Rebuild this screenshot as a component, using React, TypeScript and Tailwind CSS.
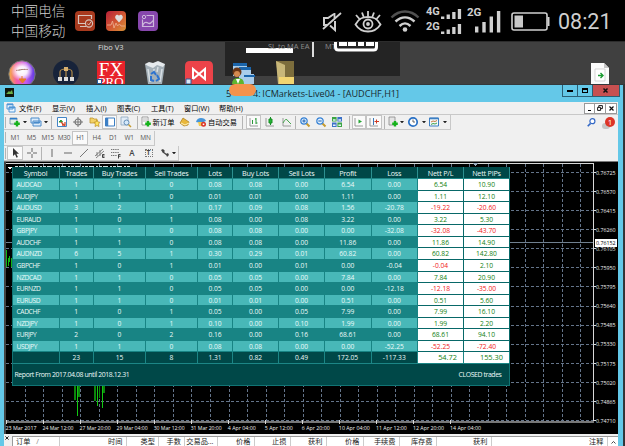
import React from 'react';

const columns = [
  { name: 'Symbol', w: 'w-[47px]' },
  { name: 'Trades', w: 'w-[34.5px]' },
  { name: 'Buy Trades', w: 'w-[52px]' },
  { name: 'Sell Trades', w: 'w-[52px]' },
  { name: 'Lots', w: 'w-[35px]' },
  { name: 'Buy Lots', w: 'w-[46px]' },
  { name: 'Sell Lots', w: 'w-[46px]' },
  { name: 'Profit', w: 'w-[46.5px]' },
  { name: 'Loss', w: 'w-[46.5px]' },
  { name: 'Nett P/L', w: 'w-[46px]' },
  { name: 'Nett PIPs', w: 'w-[46px]' },
];

const rows = [
  ['AUDCAD', '1', '1', '0', '0.08', '0.08', '0.00', '6.54', '0.00', '6.54', '10.90'],
  ['AUDJPY', '1', '1', '0', '0.01', '0.01', '0.00', '1.11', '0.00', '1.11', '12.10'],
  ['AUDUSD', '3', '2', '1', '0.17', '0.09', '0.08', '1.56', '-20.78', '-19.22', '-20.60'],
  ['EURAUD', '1', '0', '1', '0.08', '0.00', '0.08', '3.22', '0.00', '3.22', '5.30'],
  ['GBPJPY', '1', '1', '0', '0.08', '0.08', '0.00', '0.00', '-32.08', '-32.08', '-43.70'],
  ['AUDCHF', '1', '1', '0', '0.08', '0.08', '0.00', '11.86', '0.00', '11.86', '14.90'],
  ['AUDNZD', '6', '5', '1', '0.30', '0.29', '0.01', '60.82', '0.00', '60.82', '142.80'],
  ['GBPCHF', '1', '0', '1', '0.01', '0.00', '0.01', '0.00', '-0.04', '-0.04', '2.10'],
  ['NZDCAD', '1', '1', '0', '0.05', '0.05', '0.00', '7.84', '0.00', '7.84', '20.90'],
  ['EURNZD', '1', '1', '0', '0.05', '0.05', '0.00', '0.00', '-12.18', '-12.18', '-35.00'],
  ['EURUSD', '1', '1', '0', '0.01', '0.01', '0.00', '0.51', '0.00', '0.51', '5.60'],
  ['CADCHF', '1', '0', '1', '0.05', '0.00', '0.05', '7.99', '0.00', '7.99', '16.10'],
  ['NZDJPY', '1', '0', '1', '0.10', '0.00', '0.10', '1.99', '0.00', '1.99', '2.20'],
  ['EURJPY', '2', '0', '2', '0.16', '0.00', '0.16', '68.61', '0.00', '68.61', '94.10'],
  ['USDJPY', '1', '1', '0', '0.08', '0.08', '0.00', '0.00', '-52.25', '-52.25', '-72.40'],
];

const totals = ['', '23', '15', '8', '1.31', '0.82', '0.49', '172.05', '-117.33', '54.72', '155.30'];

const prices = ['0.76725', '0.76570', '0.76415', '0.76260', '0.76105', '0.75950', '0.75795', '0.75640', '0.75485', '0.75330', '0.75175', '0.75020', '0.74865', '0.74710'];

const times = ['23 Mar 2017', '24 Mar 12:00', '27 Mar 20:00', '29 Mar 04:00', '30 Mar 12:00', '31 Mar 20:00', '4 Apr 04:00', '5 Apr 12:00', '6 Apr 20:00', '10 Apr 04:00', '11 Apr 12:00', '12 Apr 20:00', '14 Apr 04:00'];

const menus = [
  { name: '文件(F)', w: 'w-[33px]' },
  { name: '显示(V)', w: 'w-[34px]' },
  { name: '插入(I)', w: 'w-[31px]' },
  { name: '图表(C)', w: 'w-[34px]' },
  { name: '工具(T)', w: 'w-[33px]' },
  { name: '窗口(W)', w: 'w-[35px]' },
  { name: '帮助(H)', w: 'w-[35px]' },
];

const orderCols = [
  { name: '时间', w: 'w-[66.5px]' },
  { name: '类型', w: 'w-[32.5px]' },
  { name: '手数', w: 'w-[26px]' },
  { name: '交易品...', w: 'w-[32.5px]' },
  { name: '价格', w: 'w-[37px]' },
  { name: '止损', w: 'w-[36px]' },
  { name: '获利', w: 'w-[36px]' },
  { name: '价格', w: 'w-[37px]' },
  { name: '手续费', w: 'w-[36px]' },
  { name: '库存费', w: 'w-[37px]' },
  { name: '获利', w: 'w-[55px]' },
  { name: '注释', w: 'w-[116px]' },
];

const Slot = ({ w, boxed, children }: { w: string; boxed?: boolean; children?: React.ReactNode }) => (
  <div className={`${w} h-[14px] shrink-0 flex items-center justify-center whitespace-nowrap ${boxed ? 'border border-[#c4c4c4] bg-[#fafafa]' : ''}`}>
    {children}
  </div>
);

const Ico = ({ children, size = 10 }: { children: React.ReactNode; size?: number }) => (
  <svg width={size} height={size} viewBox="0 0 10 10" fill="none" className="shrink-0 overflow-visible">{children}</svg>
);

const Caret = () => (
  <Slot w="w-[4px]"><svg width="4" height="2.5" viewBox="0 0 4 2.5" className="shrink-0"><path d="M0 0h4L2 2.5z" fill="#222" /></svg></Slot>
);
const Sep = ({ w }: { w: string }) => <Slot w={w}><div className="w-px h-[13px] shrink-0 bg-[#b4b4b4]" /></Slot>;
const Handle = () => <Slot w="w-[3px]"><div className="w-px h-[11px] bg-[#b4b4b4]" /></Slot>;

const Plus = () => <path d="M4.2 6.8h5.6M7 4v5.6" stroke="#16b21c" strokeWidth="2.4" />;

const bars = (x: number, base: number, hs: number[], step: number, bw: number) =>
  hs.map((h, i) => <rect key={i} x={x + i * step} y={base - h} width={bw} height={h} fill="#d0d0d0" />);

function StatusBar() {
  return (
    <div className="h-[41px] shrink-0 bg-black flex items-center text-[#cfcfcf]">
      <div className="w-[75px] pl-[11px] pb-px text-[13.6px] leading-[20px] font-light whitespace-nowrap font-['Noto_Sans_CJK_SC',sans-serif]">
        <div>中国电信</div>
        <div>中国移动</div>
      </div>
      <div className="flex gap-[11px]">
        <svg width="20" height="20" viewBox="0 0 20 20" fill="none">
          <rect width="20" height="20" rx="4" fill="#a83a1e" />
          <path d="M10 12.5H3.5v-8h13V8M5 15.5h6" stroke="#d8c4bc" strokeWidth="1.2" />
          <circle cx="14" cy="12.5" r="3.6" stroke="#d8c4bc" strokeWidth="1.1" />
          <path d="m12.3 12.5 1.4 1.5 2.8-3.7" stroke="#d8c4bc" />
        </svg>
        <svg width="20" height="20" viewBox="0 0 20 20" fill="none">
          <defs><linearGradient id="heart" x1="0" y1="0" x2="1" y2="1"><stop stopColor="#b51f38" /><stop offset=".55" stopColor="#d35a32" /><stop offset="1" stopColor="#d89438" /></linearGradient></defs>
          <rect width="20" height="20" rx="4" fill="url(#heart)" />
          <path d="M13 11.5 9.7 7.7C7.9 5 11.5 2.2 13 4.8c1.5-2.6 5.1.2 3.3 2.9z" fill="#ddd" />
          <path d="M1 14h4l1.5-4L8 17l2-5 1.5 3 2-2 1.5 2h4" stroke="#eba98a" strokeWidth=".9" />
        </svg>
        <svg width="20" height="20" viewBox="0 0 20 20" fill="none" className="ml-px">
          <rect width="20" height="20" rx="4" fill="#8747ad" />
          <path d="M8.5 4.5h7v11h-11v-7M4.5 15.3c1-4 3.5-4.8 5.5-3.3s3 0 5.3-2.5" stroke="#cdb8dc" strokeWidth="1.2" />
          <circle cx="6" cy="6" r="1.7" stroke="#cdb8dc" />
        </svg>
      </div>
      <svg width="22" height="24" viewBox="0 0 22 24" fill="none" className="ml-[163px]">
        <path d="M13 5 7 9H3v7h3M9 16.5l5 4.5V12" stroke="#d0d0d0" strokeWidth="2" />
        <path d="M13.5 4v5M2 20 20 4" stroke="#d0d0d0" strokeWidth="1.8" />
      </svg>
      <svg width="28" height="24" viewBox="0 0 28 24" fill="none" className="ml-[11px]" stroke="#d0d0d0" strokeWidth="1.8">
        <path d="M1.5 15.5C5 9 9 8 14 8s9 1 12.500 7.500C23 21 19 22.500 14 22.500S5 21 1.500 15.500z" />
        <circle cx="14" cy="15" r="4.500" /><circle cx="14" cy="15" r="1" />
        <path d="m2 6 3.500 4M8 3.500 9.700 8M14 2v5.500M20 3.500 18.300 8M26 6l-3.500 4" />
      </svg>
      <svg width="30" height="24" viewBox="0 0 30 24" fill="none" className="ml-[8px]" strokeWidth="2.400">
        <path d="M1.500 8.500c8-8 19-8 27 0" stroke="#505050" />
        <path d="M5.500 12.500c6-5.500 13-5.500 19 0M9.500 17c4-3.500 7-3.500 11 0" stroke="#d0d0d0" />
        <circle cx="15" cy="20.500" r="2.300" fill="#d0d0d0" />
      </svg>
      <div className="ml-[6px] w-[36px] pb-px flex flex-col gap-[3px] font-['Roboto',sans-serif] font-bold text-[11px] leading-[10px]">
        <div className="flex h-[12px]"><span className="w-[15px]">4G</span><svg width="21" height="12" viewBox="0 0 21 12" className="shrink-0">{bars(0, 12, [2.500, 4.500, 7, 10], 5.600, 3.300)}</svg></div>
        <div className="flex h-[12px]"><span className="w-[15px]">2G</span><svg width="21" height="12" viewBox="0 0 21 12" className="shrink-0">{bars(0, 12, [2.500, 4.500, 7, 10], 5.600, 3.300)}</svg></div>
      </div>
      <div className="ml-[5px] w-[35px] h-[28px] flex font-['Roboto',sans-serif] font-bold text-[11.500px] leading-[11px]">
        <span className="w-[8px]">2G</span>
        <svg width="26" height="26" viewBox="0 0 26 26" className="shrink-0">{bars(0, 25.500, [6, 10.500, 16, 21.500], 7.300, 3.400)}</svg>
      </div>
      <svg width="39" height="19" viewBox="0 0 39 19" fill="none" className="ml-[9px] mt-[2px] shrink-0">
        <rect x="1" y="1" width="35" height="17" rx="2" stroke="#d0d0d0" strokeWidth="1.600" />
        <path d="M37.500 5v9" stroke="#d0d0d0" strokeWidth="2" />
        <rect x="3.500" y="3.500" width="8.500" height="12" fill="#c8c8c8" />
      </svg>
      <div className="ml-[8px] mt-[3px] font-['Roboto',sans-serif] text-[21.500px] leading-none">08:21</div>
    </div>
  );
}

function Desktop() {
  return (
    <div className="relative h-[43px] shrink-0 overflow-hidden bg-[#404040] border-t border-[#2c2c2c]">
      <div className="absolute left-[98px] top-px font-['Open_Sans',sans-serif] text-[7.500px] leading-[9px] text-[#ddd] whitespace-nowrap">Fibo V3</div>
      <div className="absolute left-[225px] top-0 w-[175px] h-[34px] bg-[#242424] text-[#8c8c8c] font-['Open_Sans',sans-serif] text-[7.500px] leading-[9px]">
        <div className="absolute left-[21px] top-[6px] w-[47px] h-[5px] bg-white" />
        <span className="absolute left-[43px] top-0 whitespace-nowrap">SL to MA EA</span>
        <span className="absolute left-[100px] top-0">MT</span>
        <div className="absolute left-[87px] top-0 w-[2px] h-[15px] bg-[#ddd]" />
        <svg className="absolute left-[109px] top-0" width="44" height="10" viewBox="0 0 44 10" fill="none">
          <path d="M1.500 0v5q0 3 3 3h35q3 0 3-3V0" stroke="#fff" strokeWidth="3" />
          <path d="M5 2h8M14 2h8M24 2h6M32 2h8" stroke="#fff" strokeWidth="4" />
        </svg>
      </div>
      <div className="relative h-full pl-[8px] flex items-end">
        <svg width="28" height="24" viewBox="0 0 28 24">
          <defs>
            <linearGradient id="wheel"><stop stopColor="#f3b23c" /><stop offset=".3" stopColor="#f45ba6" /><stop offset=".65" stopColor="#c35cf0" /><stop offset="1" stopColor="#5b3be0" /></linearGradient>
            <radialGradient id="shine"><stop stopColor="#fff" /><stop offset=".45" stopColor="#fff" stopOpacity=".9" /><stop offset="1" stopColor="#fff" stopOpacity="0" /></radialGradient>
          </defs>
          <circle cx="14" cy="14" r="13.200" fill="url(#wheel)" stroke="#777" />
          <ellipse cx="14" cy="11" rx="11" ry="10" fill="url(#shine)" />
          <path d="M8 10.500q6-1.500 12-1" stroke="#a65" strokeDasharray="1 .6" />
          <path d="M14 16v3M11 19h7l-3.500 4z" fill="#e77d25" stroke="#e77d25" />
        </svg>
        <svg width="26" height="24" viewBox="0 0 26 24" fill="none" className="ml-[17px]">
          <circle cx="13" cy="13" r="13" fill="#17233a" />
          <path d="M7 18v-6q0-3 6-3t6 3v6M13 9v9" stroke="#b08a4a" strokeWidth="1.200" />
          <path d="M11 7h4v4h-4z" fill="#d8b070" />
          <path d="M5 17h4v4H5zM11 17h4v4h-4zM17 17h4v4h-4z" fill="#ddd" />
        </svg>
        <div className="relative ml-[18px] w-[28px] h-[23px] overflow-hidden bg-[#e8222a] text-white text-center font-['Liberation_Serif',serif] text-[19px] leading-[15px] pt-px">
          <div>FX</div>
          <div className="text-[13px] leading-[9px]">PRO</div>
          <div className="absolute left-0 bottom-0 size-[5px] bg-white border border-[#265c9c]" />
        </div>
        <svg width="22" height="23" viewBox="0 0 22 23" className="ml-[19px]">
          <path d="m1 3 3 20h14l3-20z" fill="#a4b0b8" />
          <path d="m1 3 4-2 4 1 5-2 7 3-2 3-6-2-4 3-5-2z" fill="#e6eaed" />
          <path d="m4 8 2 13M18 8l-2 13M10 8v3M14 6l-1 5" stroke="#d8dfe4" strokeWidth="1.500" />
          <path d="m7 13 3-2 2 3M7 15v4l3 1M12 20l3-2-2-4" stroke="#2d73cf" strokeWidth="2" fill="none" />
        </svg>
        <svg width="28" height="23" viewBox="0 0 28 23" fill="none" className="ml-[19px]">
          <path d="M0 23V5q0-5 5-5h18q5 0 5 5v18z" fill="#ec4349" />
          <path d="M8 18V8l12 10V8L8 18" stroke="#fff" strokeWidth="2" />
          <path d="M1 18h5v5H1z" fill="#dce8f4" stroke="#265c9c" />
        </svg>
        <svg width="24" height="22" viewBox="0 0 24 22" className="ml-[19px]">
          <path d="M1 1h14v13H1zM7 5h12v12H7zM10 12h12v10H10z" fill="#aacdea" />
          <path d="M1 1h14v3H1zM7 5h12v3H7zM12 13h11v2H12z" fill="#1b65ab" />
          <circle cx="5" cy="10" r="4.500" fill="#6a3515" /><circle cx="5" cy="12" r="3" fill="#d58a50" />
          <path d="M0 22q0-6 6-6t6 6z" fill="#5eb52f" /><path d="m4 17 2 5 2-5z" fill="#fff" />
        </svg>
        <svg width="19" height="23" viewBox="0 0 19 23" className="ml-[20px]">
          <path d="M0 0h18v23H3z" fill="#7c6d3c" />
          <path d="m0 0 9 4v19H2z" fill="#c8b779" />
          <path d="M3 16h15v7H3z" fill="#f2d570" />
        </svg>
        <svg width="18" height="21" viewBox="0 0 18 21" className="ml-[296px]">
          <path d="M0 0h13l5 5v16H0z" fill="#fbfbfb" /><path d="M13 0v5h5z" fill="#c6c6c6" />
          <path d="M4 6h10v12H4z" fill="#fff" stroke="#c4c4c4" strokeWidth=".7" />
          <path d="M7 12.500h5M9.500 10l2.500 2.500L9.500 15" stroke="#1c9b32" strokeWidth="1.400" fill="none" />
        </svg>
      </div>
    </div>
  );
}

function TitleBar() {
  return (
    <div className="relative h-[17px] shrink-0 flex items-start pl-[5px] text-[#182830]">
      <svg width="9" height="9" viewBox="0 0 9 9" className="mt-[3px]"><rect width="9" height="9" fill="#10160c" /><path d="m1 6 3-3 1 1 2-2 1 4z" fill="#6cae47" /></svg>
      <div className="absolute left-[226px] top-[2px] font-['Open_Sans',sans-serif] text-[9.500px] leading-[13px]">5</div>
      <div className="ml-[239px] mt-[2px] w-[144px] whitespace-nowrap font-['Open_Sans',sans-serif] text-[9.100px] leading-[13px]">
        <span className="inline-block w-[7px] overflow-visible">4:</span> ICMarkets-Live04 - [AUDCHF,H1]
      </div>
      <div className="absolute left-[229px] -top-px w-[27px] h-[12px] rounded-[6px] bg-[#f4924c]" />
      <div className="ml-[164.500px] flex h-[12px] border border-t-0 border-[#2b5f74]">
        <div className="w-[15px] border-r border-[#2b5f74] flex items-end justify-center pb-[4px]"><div className="w-[6px] h-[2px] bg-black" /></div>
        <div className="w-[15px] border-r border-[#2b5f74] flex items-center justify-center"><div className="w-[6px] h-[5px] border border-t-2 border-black" /></div>
        <div className="w-[26px] bg-[#c75050] flex items-center justify-center"><Ico size={5}><path d="m1 1 8 8M9 1 1 9" stroke="#111" strokeWidth="3" /></Ico></div>
      </div>
    </div>
  );
}

function MenuBar() {
  return (
    <div className="h-[13px] shrink-0 flex items-center border-b border-[#c8c8c8] text-[7.200px] leading-[10px] font-['Open_Sans','Noto_Sans_CJK_SC',sans-serif]">
      <div className="w-[15px] pl-[2px]"><Ico><path d="M1 1h6v5H1zM3 4h6v5H3z" fill="#eaf5ff" stroke="#5196d6" /><path d="M1 1.500h6M3 4.500h6" stroke="#5196d6" strokeWidth="1.500" /></Ico></div>
      {menus.map(m => <div key={m.name} className={`${m.w} shrink-0 whitespace-nowrap`}>{m.name}</div>)}
      <div className="ml-auto mr-px flex h-[11px] bg-white border border-[#999]">
        <div className="w-[10px] border-r border-[#999] flex items-end justify-center pb-[2px]"><div className="w-[3px] h-px bg-black" /></div>
        <div className="w-[11px] border-r border-[#999] flex items-center justify-center"><Ico size={6}><path d="M3 4V1h6v5H6M1 4h5v5H1z" stroke="#111" strokeWidth="1.600" /></Ico></div>
        <div className="w-[10px] flex items-center justify-center"><Ico size={5}><path d="m1 1 8 8M9 1 1 9" stroke="#111" strokeWidth="2.400" /></Ico></div>
      </div>
    </div>
  );
}

const Mag = ({ sign }: { sign: string }) => (
  <Ico><path d="m6 6 3.500 3.500" stroke="#c59a2e" strokeWidth="2" /><circle cx="4" cy="4" r="3.200" fill="#e4f2ff" stroke="#3681d4" strokeWidth="1.200" /><path d={sign} stroke="#1b5fae" /></Ico>
);
const Axis = () => <path d="M1 1v8h8" stroke="#9a9a9a" />;

function Toolbars() {
  return (
    <div className="shrink-0 text-[#444] font-['Open_Sans','Noto_Sans_CJK_SC',sans-serif]">
      <div className="h-[15px] flex items-center">
        <div className="flex items-center border-r border-b border-[#c8c8c8] pr-[3px]">
          <Handle />
          <Slot w="w-[15px]"><Ico><path d="M0 1h7v6H0z" fill="#e1f0e5" stroke="#6a8b9f" strokeWidth=".8" /><path d="M0 1h7v1.500H0z" fill="#2e7ccb" /><Plus /></Ico></Slot>
          <Slot w="w-[1px]" /><Caret />
          <Slot w="w-[17px]"><Ico><path d="M0 1h8v5H0zM2 4h8v5H2z" fill="#dcecfb" stroke="#4a8bca" /><path d="M3 5.500h6" stroke="#4a8bca" strokeWidth="1.500" /></Ico></Slot>
          <Caret />
          <Sep w="w-[7px]" />
          <Slot w="w-[13px]"><Ico><path d="M.5.5h9v9h-9z" fill="#fff" stroke="#4385c6" /><path d="m2 5 2-2 1.500 2z" fill="#2a9c38" stroke="#2a9c38" /><path d="m4 5 4 4M5 8h3V5" stroke="#d34a2b" strokeWidth="1.300" /></Ico></Slot>
          <Slot w="w-[19px]"><Ico><circle cx="5" cy="5" r="3" stroke="#777" strokeWidth="1.200" /><path d="M5 0v10M0 5h10" stroke="#777" /></Ico></Slot>
          <Slot w="w-[15px]"><Ico><path d="M0 1h3l1 1h3v4H0z" fill="#f2d167" stroke="#b78b22" strokeWidth=".7" /><path d="m7 3 1 2 2 .3L8.500 7 9 9.500l-2-1-2 1L5.400 7 4 5.300 6 5z" fill="#ffe35c" stroke="#b78b22" strokeWidth=".7" /></Ico></Slot>
          <Slot w="w-[15px]" boxed><Ico><path d="M.5 1h9v8h-9z" fill="#fff" stroke="#3c7fc4" /><path d="M2 1v8" stroke="#3c7fc4" strokeWidth="2.500" /></Ico></Slot>
          <Slot w="w-[17px]"><Ico><path d="M0 0h7v8H0z" fill="#e2ecf6" stroke="#8ca5bd" strokeWidth=".8" /><path d="m7 7 3 3" stroke="#c59a2e" strokeWidth="1.500" /><circle cx="5.500" cy="5.500" r="2.500" fill="#d5e9fb" stroke="#658fb8" /></Ico></Slot>
          <Sep w="w-[6px]" />
          <Slot w="w-[12px]"><Ico><path d="M1 0h6v8H1z" fill="#fff" stroke="#888" strokeWidth=".8" /><path d="M2 2h4M2 4h4" stroke="#999" strokeWidth=".7" /><Plus /></Ico></Slot>
          <Slot w="w-[23px]"><span className="text-[7.300px] text-black">新订单</span></Slot>
          <Slot w="w-[20px]"><Ico><path d="m3 1 6 4-1 3-4 1-4-3z" fill="#e9b83c" stroke="#a87815" strokeWidth=".7" /><path d="m1 6 4 2 4-2" stroke="#fff2ba" /></Ico></Slot>
          <Slot w="w-[12px]"><Ico><path d="M0 5q1-4 5-4t5 3L5 6z" fill="#4695d8" /><path d="m2 5 6 0-2 4H3z" fill="#f1cb50" /><circle cx="7.500" cy="7.300" r="2.500" fill="#db3527" /><path d="M6.700 6.500h1.600v1.600H6.700z" fill="#fff" /></Ico></Slot>
          <Slot w="w-[31px]"><span className="text-[7.200px] text-black">自动交易</span></Slot>
          <Sep w="w-[8px]" />
          <Slot w="w-[15px]" boxed><Ico><Axis /><path d="M3.500 3v4M3 6h1M7 1v6M6 2h1M7 6h1.500" stroke="#2a9838" /></Ico></Slot>
          <Slot w="w-[17px]"><Ico><Axis /><path d="M5.500 0v8" stroke="#178f25" /><path d="M4 2h3v4H4z" fill="#25b534" stroke="#178f25" /></Ico></Slot>
          <Slot w="w-[17px]"><Ico><Axis /><path d="M1 6q3-6 5-2l3 3" stroke="#45a44d" /></Ico></Slot>
          <Sep w="w-[1px]" />
          <Slot w="w-[18px]"><Mag sign="M2.300 4h3.400M4 2.300v3.400" /></Slot>
          <Slot w="w-[14px]"><Mag sign="M2.300 4h3.400" /></Slot>
          <Slot w="w-[18px]"><Ico><path d="M0 0h4.600v4.600H0zM5.400 5.400H10V10H5.400z" fill="#3ba544" /><path d="M5.400 0H10v4.600H5.400zM0 5.400h4.600V10H0z" fill="#3c72c8" /><path d="M1 3h2.600M6.400 3H9M1 8.300h2.600M6.400 8.300H9" stroke="#e8f2f8" strokeWidth="1.600" /></Ico></Slot>
          <Sep w="w-[6px]" />
          <Slot w="w-[14px]" boxed><Ico><Axis /><path d="M4.500 2.500v4L8 4.500z" fill="#25a534" /></Ico></Slot>
          <Slot w="w-[16px]" boxed><Ico><Axis /><path d="M4.500 1v7" stroke="#3979b9" /><path d="M5.500 4.500H10M7.500 2.500v4" stroke="#cf3b24" /></Ico></Slot>
          <Sep w="w-[4px]" />
          <Slot w="w-[14px]"><Ico><path d="M1 0h6v8H1z" fill="#e4e4e4" stroke="#888" strokeWidth=".8" /><Plus /></Ico></Slot>
          <Caret />
          <Slot w="w-[18px]"><Ico><circle cx="5" cy="5" r="4.200" fill="#fff" stroke="#2870c5" strokeWidth="1.700" /><path d="M5 2.500V5h2" stroke="#555" strokeWidth=".9" /></Ico></Slot>
          <Caret />
          <Slot w="w-[16px]"><Ico><path d="M.5 1h9v8h-9z" fill="#f4f8fa" stroke="#3c7fc4" /><path d="M.5 1.500h9" stroke="#3c7fc4" strokeWidth="1.600" /><path d="m2 5 2-1 2 .5L8 3.500" stroke="#c77a3f" /><path d="m2 7.500 2-1 2 .5 2-1" stroke="#3fa34e" /></Ico></Slot>
          <Slot w="w-[1px]" /><Caret />
        </div>
        <div className="ml-auto pr-[3px] flex items-center gap-[6px]">
          <Ico size={9}><circle cx="6" cy="3.500" r="2.800" fill="#fff" stroke="#3368c6" strokeWidth="1.300" /><path d="M4 6 .8 9.200" stroke="#3368c6" strokeWidth="1.800" /></Ico>
          <div className="relative w-[13px] h-[12px]">
            <div className="absolute left-0 bottom-0 w-[8px] h-[6px] rounded-full bg-[#c5c5c5]" />
            <div className="absolute right-0 top-0 size-[10px] rounded-full bg-[#dd3426] text-white text-[8px] leading-[10px] text-center">1</div>
          </div>
        </div>
      </div>
      <div className="h-[16px] flex items-center">
        <div className="flex items-center border-r border-b border-[#c8c8c8] text-[6.500px] tracking-[-0.200px] text-[#555]">
          <Handle />
          {['M1', 'M5', 'M15', 'M30', 'H1', 'H4', 'D1', 'W1', 'MN'].map(p => (
            <Slot key={p} w="w-[16.300px]" boxed={p === 'H1'}>{p}</Slot>
          ))}
        </div>
      </div>
      <div className="h-[15px] flex items-center">
        <div className="flex items-center border-r border-b border-[#c8c8c8] pr-[2px]">
          <Handle />
          <Slot w="w-[16px]" boxed><Ico><path d="M3 0v8l2-1.800 1.500 3.500 1.400-.7-1.500-3.200H9z" fill="#333" /></Ico></Slot>
          <Slot w="w-[17px]"><Ico><path d="M5 0v4M5 6v4M0 5h4M6 5h4" stroke="#666" /></Ico></Slot>
          <Sep w="w-[3px]" />
          <Slot w="w-[17px]"><Ico><path d="M5 1v8" stroke="#666" /></Ico></Slot>
          <Slot w="w-[16px]"><Ico><path d="M1 5h8" stroke="#666" /></Ico></Slot>
          <Slot w="w-[16px]"><Ico><path d="m1 9 8-8" stroke="#777" /></Ico></Slot>
          <Slot w="w-[16px]"><Ico><path d="m0 8 8-7M1 10l8-7M2 4v4M5 2v6" stroke="#777" strokeWidth=".9" /><path d="M9.500 6.500H7.500v3h2M7.500 8h2" stroke="#333" strokeWidth=".9" /></Ico></Slot>
          <Slot w="w-[16px]"><Ico><path d="M0 1.500h8M0 4.500h8M0 7.500h6" stroke="#777" strokeDasharray="1.200 .6" /><path d="M9.500 6.500H7.500v4M7.500 8.200h2" stroke="#333" strokeWidth=".9" /></Ico></Slot>
          <Slot w="w-[16px]"><span className="text-[8px] leading-none font-semibold">A</span></Slot>
          <Slot w="w-[17px]"><div className="size-[8px] border border-dotted border-[#777] text-[6.500px] leading-[6px] font-bold text-center">T</div></Slot>
          <Slot w="w-[15px]"><Ico><path d="m1 2 2-1 2 2-2 2zM6 6l2-1 1 2-2 2z" fill="#444" /><path d="m3 4 4 3" stroke="#444" strokeWidth="1.300" /></Ico></Slot>
          <Caret />
        </div>
      </div>
    </div>
  );
}

function ReportTable() {
  return (
    <div className="absolute left-[7.500px] top-[5px] w-[498px] h-[219px] bg-[#004848] border border-t-0 border-[#107474] font-['Open_Sans',sans-serif] text-[6.700px] text-[#ecfaf8]">
      <div className="h-[12px] flex border-b border-[#1c8686]">
        {columns.map(c => (
          <div key={c.name} className={`${c.w} shrink-0 border-r border-[#2c9090] text-center text-[7.200px] tracking-[-0.200px] leading-[12px] whitespace-nowrap`}>{c.name}</div>
        ))}
      </div>
      {rows.map((r, i) => (
        <div key={r[0]} className={`h-[11.570px] flex ${i % 2 ? 'bg-[#188484]' : 'bg-[#48b8b8]'}`}>
          {r.map((v, j) => {
            const tone = j > 8
              ? `bg-white border-[#086868] border-b ${v[0] === '-' ? 'text-[#f01818]' : 'text-[#108010]'}`
              : i % 2 ? 'border-[#188484]' : 'border-[#188484] border-b';
            return (
              <div key={j} className={`${columns[j].w} shrink-0 border-r leading-[12px] ${j ? 'text-center' : 'pl-[4px] tracking-[-0.400px]'} ${tone}`}>{v}</div>
            );
          })}
        </div>
      ))}
      <div className="h-[12px] flex border-b border-[#1c8686]">
        {totals.map((v, j) => (
          <div key={j} className={`${columns[j].w} shrink-0 border-r border-[#1c8686] leading-[11px] ${j > 8 ? 'bg-white text-[#108010] text-right pr-[6px] text-[7.400px]' : 'text-center'}`}>{v}</div>
        ))}
      </div>
      <div className="h-[21px] flex items-center justify-between pl-[2px] pr-[7px] text-[6.900px] tracking-[-0.400px]">
        <span>Report From 2017.04.08 until 2018.12.31</span>
        <span>CLOSED trades</span>
      </div>
    </div>
  );
}

function Chart() {
  return (
    <div className="relative h-[273px] shrink-0 bg-black border-t border-[#777]">
      <svg width="614" height="272" viewBox="4 162 614 272" className="block font-['Open_Sans',sans-serif]" shapeRendering="crispEdges">
        <rect x="4" y="162" width="2" height="272" fill="#444" />
        <g stroke="#64748a" strokeWidth="1" strokeDasharray="3 2">
          {Array.from({ length: 31 }, (_, i) => <path key={i} d={`M${25.300 + i * 18.520} 164V420`} />)}
          {prices.map((p, i) => <path key={p} d={`M6 ${172.500 + i * 19.080}H593`} />)}
        </g>
        <path d="M6 242.500H593" stroke="#708090" />
        <path d="M6 163.500H593.500V421" stroke="#d8d8d8" fill="none" />
        <path d="M6 421.500H594" stroke="#777" strokeWidth="2" />
        <path d="M8 167h4l-2 2.500z" fill="#fff" />
        <path d="M15 166h116" stroke="#cfe0e0" strokeDasharray="3 1 5 2 2 1" />
        <path d="M6.500 250v17M8.500 258v8M9.500 256v6M11.500 258v9" stroke="#12b412" />
        <path d="M75 386v14M79 386v11M95 386v15M99.500 386v12M104 386v7" stroke="#0c860c" strokeWidth="1.800" />
        <path d="M77.500 386v30M97 386v20M102.500 386v22" stroke="#12c812" />
        <path d="M472 163h7l-3.500 3z" fill="#9aabbe" />
        <g fill="#f0f0f0" fontSize="6">
          {prices.map((p, i) => (
            <g key={p}>
              <path d={`M593 ${172.500 + i * 19.080}h3`} stroke="#d8d8d8" />
              <text x="596" y={174.700 + i * 19.080} textLength="19.500" lengthAdjust="spacingAndGlyphs">{p}</text>
            </g>
          ))}
          {times.map((t, i) => (
            <g key={t}>
              <path d={`M${6.500 + i * 37.040} 420v4`} stroke="#d8d8d8" />
              <text x={5.500 + i * 37.040} y="429.500" textLength={t.length > 11 || i === 0 ? 31 : 28} lengthAdjust="spacingAndGlyphs">{t}</text>
            </g>
          ))}
        </g>
        <rect x="595" y="239" width="22" height="7.500" fill="#fff" />
        <text x="596" y="245" fontSize="6" fill="#000" textLength="19.500" lengthAdjust="spacingAndGlyphs">0.76152</text>
      </svg>
      <ReportTable />
    </div>
  );
}

function Terminal() {
  return (
    <div className="flex-1 pt-[2px] flex bg-[#f0f0f0] overflow-hidden font-['Open_Sans','Noto_Sans_CJK_SC',sans-serif] text-[7.200px] leading-[9px] text-[#222]">
      <div className="w-[8px] shrink-0 pl-px"><Ico size={4}><path d="m1 1 8 8M9 1 1 9" stroke="#222" strokeWidth="2.400" /></Ico></div>
      <div className="flex bg-white border-t border-l border-[#999]">
        <div className="w-[47px] shrink-0 pl-[3px] border-r border-[#ccc]">订单 <span className="ml-[4px] text-[#888]">/</span></div>
        {orderCols.map((c, i) => (
          <div key={i} className={`${c.w} shrink-0 pr-[3px] border-r border-[#ccc] text-right whitespace-nowrap`}>{c.name}</div>
        ))}
        <div className="w-[11px] flex justify-center pt-[3px]"><Ico size={5}><path d="m1 7 4-4 4 4" stroke="#333" strokeWidth="1.800" /></Ico></div>
      </div>
    </div>
  );
}

export default function App() {
  return (
    <div className="w-[625px] h-[446px] flex flex-col overflow-hidden bg-[#333]">
      <StatusBar />
      <Desktop />
      <div className="w-[624px] flex-1 min-h-0 flex flex-col bg-[#64c8e8] border-t border-r border-[#33383b]">
        <TitleBar />
        <div className="ml-[4px] mr-[5px] flex-1 min-h-0 flex flex-col bg-[#f0f0f0] text-black">
          <MenuBar />
          <Toolbars />
          <Chart />
          <Terminal />
        </div>
      </div>
    </div>
  );
}
